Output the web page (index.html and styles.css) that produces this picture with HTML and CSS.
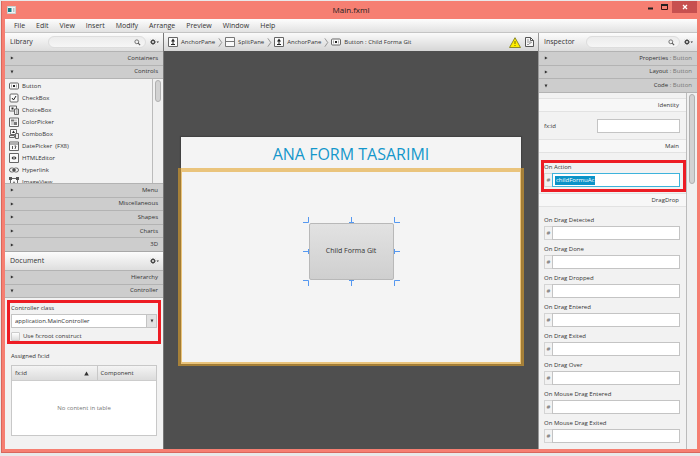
FILE: index.html
```
<!DOCTYPE html>
<html lang="en">
<head>
<meta charset="utf-8">
<title>Main.fxml</title>
<link rel="stylesheet" href="styles.css">
</head>
<body>
<svg class="defs" aria-hidden="true">
  <defs>
    <symbol id="i-anchor" viewBox="0 0 10 10"><path d="M.5.5h9v9h-9z" fill="#fafafa" stroke="#666"/><path d="M5 3v4M3 7.500h4" stroke="#222"/><path d="M5 1.500 7 4.500H3z" fill="#222"/></symbol>
    <symbol id="i-split" viewBox="0 0 10 10"><path d="M.5.5h9v9h-9zM.5 4.500h9" fill="#fafafa" stroke="#777"/></symbol>
    <symbol id="i-button" viewBox="0 0 10 10"><rect x=".5" y="2" width="9" height="6" rx="1" fill="#fafafa" stroke="#666"/><path d="M2.500 3.500v3M7.500 3.500v3" stroke="#aaa" fill="none"/><path d="M4 5h2" stroke="#222" stroke-width="2"/></symbol>
    <symbol id="i-check" viewBox="0 0 10 10"><rect x="1" y="1" width="8" height="8" rx="1" fill="#fafafa" stroke="#666"/><path d="m3 5 1.500 2L7 3" fill="none" stroke="#222"/></symbol>
    <symbol id="i-choice" viewBox="0 0 10 10"><path d="M.5 1h7v5h-7z" fill="#fafafa" stroke="#666"/><path d="M2.500 3.500h2" stroke="#222" stroke-width="2"/><path d="M5.500 4h4v5.500h-4z" fill="#eee" stroke="#666"/><path d="M7 6h1.500M7 8h1.500" stroke="#777"/></symbol>
    <symbol id="i-color" viewBox="0 0 10 10"><path d="M.5 1h9v8.500h-9z" fill="#fafafa" stroke="#666"/><path d="M2 2.500h3v2H2zM5 5h3v3H5z" fill="#777"/><path d="M5 2.500h3v2H5zM2 5h3v3H2z" fill="#ccc"/></symbol>
    <symbol id="i-combo" viewBox="0 0 10 10"><path d="M1.500.5h6v5h-6z" fill="#fafafa" stroke="#666"/><path d="m4.500 1.500 1.500 2.500H3z" fill="#222"/><path d="M.5 6.500h5v2h-5zM6.500 4.500h3v5h-3z" fill="#eee" stroke="#666"/></symbol>
    <symbol id="i-date" viewBox="0 0 10 10"><path d="M.5 1h9v8.500h-9zM.5 3h9" fill="#fafafa" stroke="#666"/><path d="M3.500 5v3M5.500 5h1.500L6 8" fill="none" stroke="#555"/></symbol>
    <symbol id="i-html" viewBox="0 0 10 10"><path d="M.5.500h9v9h-9z" fill="#fafafa" stroke="#666"/><path d="M4.500 3 2.500 5l2 2zM5.500 3l2 2-2 2z" fill="#222"/></symbol>
    <symbol id="i-link" viewBox="0 0 10 10"><rect x=".5" y="3" width="5" height="4" rx="2" fill="none" stroke="#666"/><rect x="4.500" y="3" width="5" height="4" rx="2" fill="none" stroke="#666"/><path d="M3 5h4" stroke="#222"/></symbol>
    <symbol id="i-image" viewBox="0 0 10 10"><path d="M1.500 1.500h7v7h-7z" fill="#fafafa" stroke="#666"/><path d="M0 0h3v3H0zM7 0h3v3H7zM0 7h3v3H0zM7 7h3v3H7z" fill="#555"/><path d="m3 7 2-3 2 3z" fill="#777"/></symbol>
    <symbol id="i-search" viewBox="0 0 8 8"><circle cx="3.200" cy="3.200" r="2.200" fill="none" stroke="#666"/><path d="M4.800 4.800 7 7" stroke="#555" stroke-width="1.200"/></symbol>
    <symbol id="i-gear" viewBox="0 0 9 6"><circle cx="3" cy="3" r="1.600" fill="none" stroke="#444" stroke-width="1.200"/><path d="M3 0v1M3 5v1M0 3h1M5 3h1M.9.9l.7.7M4.400 4.400l.7.700M.9 5.100l.7-.7M4.400 1.600l.7-.7" stroke="#444" stroke-width=".8"/><path d="M6.500 2.500H9L7.750 4z" fill="#333"/></symbol>
    <symbol id="i-sep" viewBox="0 0 6 10"><path d="m1 0 3.500 5L1 10" fill="none" stroke="#888"/></symbol>
    <symbol id="i-right" viewBox="0 0 5 5"><path d="M1 .5v4L4.500 2.500z" fill="#333"/></symbol>
    <symbol id="i-down" viewBox="0 0 5 5"><path d="M.7 .5h3.600L2.500 4.500z" fill="#333"/></symbol>
  </defs>
</svg>

<div class="window">
  <header class="titlebar">
    <svg class="app-icon" viewBox="0 0 9 8" aria-hidden="true"><path d="M.5.5h8v7h-8z" fill="#f2f4f4" stroke="#c9d2d2"/><path d="M1 2h3.500v4H1z" fill="#167f86"/><path d="M6 2h1.500v4H6z" fill="#b9c6c8"/></svg>
    <h1 class="title">Main.fxml</h1>
    <div class="window-buttons">
      <button class="wbtn" aria-label="Minimize"><svg width="6" height="6" viewBox="0 0 6 6"><path d="M1 4.500h5" stroke="#222" stroke-width="2"/></svg></button>
      <button class="wbtn" aria-label="Maximize"><svg width="7" height="6" viewBox="0 0 7 6"><path d="M.5.500h6v5h-6z" fill="none" stroke="#3a1512"/><path d="M0 1h7" stroke="#222" stroke-width="2"/></svg></button>
      <button class="wbtn wbtn-close" aria-label="Close"><svg width="6" height="6" viewBox="0 0 6 6"><path d="m1 1 4 4M5 1 1 5" stroke="#fff" stroke-width="1.300"/></svg></button>
    </div>
  </header>

  <nav class="menubar" aria-label="Main menu">
    <button>File</button><button>Edit</button><button>View</button><button>Insert</button><button>Modify</button><button>Arrange</button><button>Preview</button><button>Window</button><button>Help</button>
  </nav>

  <div class="body">
    <aside class="side">
      <div class="panel-head">
        <h2>Library</h2>
        <div class="search"><input type="search" aria-label="Search library"><svg><use href="#i-search"/></svg></div>
        <button class="gear" aria-label="Library options"><svg><use href="#i-gear"/></svg></button>
      </div>
      <div class="acc acc-2">
        <button><svg><use href="#i-right"/></svg><span>Containers</span></button>
        <button><svg><use href="#i-down"/></svg><span>Controls</span></button>
      </div>
      <div class="scroll library">
        <ul class="items">
          <li><svg><use href="#i-button"/></svg>Button</li>
          <li><svg><use href="#i-check"/></svg>CheckBox</li>
          <li><svg><use href="#i-choice"/></svg>ChoiceBox</li>
          <li><svg><use href="#i-color"/></svg>ColorPicker</li>
          <li><svg><use href="#i-combo"/></svg>ComboBox</li>
          <li><svg><use href="#i-date"/></svg>DatePicker&nbsp; (FX8)</li>
          <li><svg><use href="#i-html"/></svg>HTMLEditor</li>
          <li><svg><use href="#i-link"/></svg>Hyperlink</li>
          <li><svg><use href="#i-image"/></svg>ImageView</li>
        </ul>
        <div class="track"><div class="thumb thumb-short"></div></div>
      </div>
      <div class="acc acc-5">
        <button><svg><use href="#i-right"/></svg><span>Menu</span></button>
        <button><svg><use href="#i-right"/></svg><span>Miscellaneous</span></button>
        <button><svg><use href="#i-right"/></svg><span>Shapes</span></button>
        <button><svg><use href="#i-right"/></svg><span>Charts</span></button>
        <button><svg><use href="#i-right"/></svg><span>3D</span></button>
      </div>
      <div class="panel-head panel-head-doc">
        <h2>Document</h2>
        <button class="gear" aria-label="Document options"><svg><use href="#i-gear"/></svg></button>
      </div>
      <div class="acc acc-2">
        <button><svg><use href="#i-right"/></svg><span>Hierarchy</span></button>
        <button><svg><use href="#i-down"/></svg><span>Controller</span></button>
      </div>
      <div class="controller">
        <div class="controller-form marked">
          <label for="cclass">Controller class</label>
          <div class="combo">
            <select id="cclass"><option>application.MainController</option></select>
            <span class="combo-arrow"><svg><use href="#i-down"/></svg></span>
          </div>
          <label class="check"><input type="checkbox">Use fx:root construct</label>
        </div>
        <h3>Assigned fx:id</h3>
        <table class="ids">
          <thead><tr><th class="col-id"><span>fx:id<svg viewBox="0 0 5 5"><path d="M2.500.500 4.800 4.500H.2z" fill="#333"/></svg></span></th><th>Component</th></tr></thead>
          <tbody><tr><td colspan="2">No content in table</td></tr></tbody>
        </table>
      </div>
    </aside>

    <main class="center">
      <nav class="crumbs" aria-label="Selection path">
        <svg class="ico"><use href="#i-anchor"/></svg><span>AnchorPane</span><svg class="sep"><use href="#i-sep"/></svg>
        <svg class="ico"><use href="#i-split"/></svg><span>SplitPane</span><svg class="sep"><use href="#i-sep"/></svg>
        <svg class="ico"><use href="#i-anchor"/></svg><span>AnchorPane</span><svg class="sep"><use href="#i-sep"/></svg>
        <svg class="ico"><use href="#i-button"/></svg><span>Button : Child Forma Git</span>
        <div class="status">
          <svg class="warn" viewBox="0 0 12 11"><path d="M6 .7 11.500 10.500H.5z" fill="#ffee00" stroke="#8c8a2a" stroke-linejoin="round"/><path d="M6 4v3M6 8v1" stroke="#7a6a00"/></svg>
          <svg class="doc" viewBox="0 0 9 10"><path d="M.5.5h5l3 3v6h-8z" fill="#f6f6f6" stroke="#555"/><path d="M5.500.500v3h3" fill="none" stroke="#555"/><path d="M2 3h2M2 5h4M2 7.500h2M4 7l3-2" stroke="#999"/></svg>
        </div>
      </nav>
      <div class="workspace">
        <div class="stage">
          <div class="stage-title">ANA FORM TASARIMI</div>
          <div class="stage-pane">
            <div class="selected">
              <button>Child Forma Git</button>
              <svg class="handles" viewBox="0 0 97 69" aria-hidden="true"><g fill="none" stroke="#5598f0"><path d="M0 5.500h5.500V0M91.500 0v5.500H97M0 63.500h5.500V69M97 63.500h-5.500V69"/><path d="M48.500 0v5M46 5.500h5M48.500 64v5M46 63.500h5M0 34.500h5M5.500 32v5M92 34.500h5M91.500 32v5"/></g></svg>
            </div>
          </div>
        </div>
      </div>
    </main>

    <aside class="side inspector">
      <div class="panel-head">
        <h2>Inspector</h2>
        <div class="search search-narrow"><input type="search" aria-label="Search inspector"><svg><use href="#i-search"/></svg></div>
        <button class="gear" aria-label="Inspector options"><svg><use href="#i-gear"/></svg></button>
      </div>
      <div class="acc acc-3">
        <button><svg><use href="#i-right"/></svg><span>Properties <i>: Button</i></span></button>
        <button><svg><use href="#i-right"/></svg><span>Layout <i>: Button</i></span></button>
        <button><svg><use href="#i-down"/></svg><span>Code <i>: Button</i></span></button>
      </div>
      <div class="scroll">
        <div class="props">
          <h3 class="band">Identity</h3>
          <div class="idrow"><label for="fxid">fx:id</label><input id="fxid" type="text"></div>
          <h3 class="band">Main</h3>
          <div class="field action marked"><label for="onaction">On Action</label><div class="hash focus"><span>#</span><div class="edit"><input id="onaction" type="text" value="childFormuAc"></div></div></div>
          <h3 class="band">DragDrop</h3>
          <div class="fields">
            <div class="field"><label for="d1">On Drag Detected</label><div class="hash"><span>#</span><input id="d1" type="text"></div></div>
            <div class="field"><label for="d2">On Drag Done</label><div class="hash"><span>#</span><input id="d2" type="text"></div></div>
            <div class="field"><label for="d3">On Drag Dropped</label><div class="hash"><span>#</span><input id="d3" type="text"></div></div>
            <div class="field"><label for="d4">On Drag Entered</label><div class="hash"><span>#</span><input id="d4" type="text"></div></div>
            <div class="field"><label for="d5">On Drag Exited</label><div class="hash"><span>#</span><input id="d5" type="text"></div></div>
            <div class="field"><label for="d6">On Drag Over</label><div class="hash"><span>#</span><input id="d6" type="text"></div></div>
            <div class="field"><label for="d7">On Mouse Drag Entered</label><div class="hash"><span>#</span><input id="d7" type="text"></div></div>
            <div class="field"><label for="d8">On Mouse Drag Exited</label><div class="hash"><span>#</span><input id="d8" type="text"></div></div>
          </div>
        </div>
        <div class="track"><div class="thumb thumb-long"></div></div>
      </div>
    </aside>
  </div>
</div>
</body>
</html>
```
FILE: styles.css
```
* { box-sizing: border-box; }
body {
  margin: 0;
  height: 100vh;
  padding: 1px 0 3px 1px;
  background: #e9e9ea;
  font: 6px/12px "Open Sans", "Noto Sans", sans-serif;
  color: #333;
}
h1, h2, h3, ul { margin: 0; padding: 0; font: inherit; }
button, input, select { font: inherit; color: inherit; margin: 0; padding: 0; border: 0; background: none; border-radius: 0; }
svg { display: block; flex: none; }
.defs { position: absolute; width: 0; height: 0; }

.window {
  height: 100%;
  display: flex;
  flex-direction: column;
  background: #f67f72;
  border: solid #d9675c;
  border-width: 0 0 1px 1px;
  padding: 0 3px 3px;
}
.titlebar { flex: 0 0 18px; display: grid; grid-template-columns: 1fr auto 1fr; align-items: center; }
.app-icon { width: 9px; height: 8px; margin-left: 2px; }
.title { font-size: 8px; color: #222; }
.window-buttons { display: flex; justify-content: flex-end; align-self: start; height: 12px; }
.wbtn { width: 15px; display: grid; place-items: center; }
.wbtn-close { width: 25px; background: #c75050; }

.menubar { flex: 0 0 14px; display: flex; gap: 11px; padding-left: 9px; background: linear-gradient(#fdfdfd, #e2e2e2); border-bottom: 1px solid #c4c4c4; font-size: 7px; }

.body { flex: 1; min-height: 0; display: grid; grid-template-columns: 158px 1fr 159px; }
.side { display: flex; flex-direction: column; min-height: 0; background: #f2f2f2; }
.inspector { border-left: 1px solid #999; }

.panel-head { flex: 0 0 18px; display: flex; align-items: center; gap: 4px; padding: 0 4px 0 5px; background: linear-gradient(#fcfcfc, #dedede); }
.panel-head h2 { flex: 1; font-size: 7px; }
.panel-head-doc { border-top: 1px solid #a8a8a8; flex-basis: 19px; }
.search { flex: 0 0 98px; height: 12px; display: flex; align-items: center; padding: 0 4px; border: 1px solid #ddd; border-radius: 6px; background: linear-gradient(#ececec, #f6f6f6); }
.search-narrow { flex-basis: 92px; }
.search input { flex: 1; min-width: 0; height: 10px; }
.search svg { width: 7px; height: 7px; }
.gear svg { width: 9px; height: 6px; }

.acc { display: grid; grid-auto-rows: 1fr; background: #cdcdcd; flex: none; }
.acc-2 { height: 27px; }
.acc-3 { height: 41px; }
.acc-5 { height: 68px; }
.acc button { display: flex; justify-content: space-between; align-items: center; padding: 0 5px; border-top: 1px solid #b3b3b3; line-height: 11px; }
.acc svg { width: 4px; height: 4px; }
.acc i { font-style: normal; color: #777; }

.scroll { flex: 1; min-height: 0; display: flex; overflow: hidden; border-top: 1px solid #b3b3b3; }
.track { flex: 0 0 10px; padding: 1px 2px; border-left: 1px solid #bbb; background: #f0f0f0; }
.thumb { width: 6px; border: 1px solid #b0b0b0; border-radius: 3px; background: #d2d2d2; }
.thumb-short { height: 22px; }
.thumb-long { height: 90px; }
.library { flex: 0 0 105px; }
.items { flex: 1; list-style: none; padding: 1px 4px; }
.items li { display: flex; align-items: center; gap: 3px; height: 12px; }
.items svg { width: 10px; height: 10px; }

.controller { flex: 1; min-height: 0; padding: 4px 6px 13px; display: flex; flex-direction: column; border-top: 1px solid #b3b3b3; }
.controller label { display: block; }
.marked { position: relative; }
.marked::after { content: ""; position: absolute; inset: -2px -4px; border: 3px solid #ed1c24; pointer-events: none; }
.combo { position: relative; height: 14px; display: flex; }
.combo select { flex: 1; appearance: none; height: 14px; padding-left: 3px; background: #fff; border: 1px solid #c4c4c4; }
.combo-arrow { position: absolute; inset: 1px 1px 1px auto; width: 10px; display: grid; place-items: center; background: #e2e2e2; border-left: 1px solid #c4c4c4; pointer-events: none; }
.combo-arrow svg { width: 4px; height: 4px; }
.controller .check { display: flex; align-items: center; gap: 3px; padding-top: 2px; }
.check input { appearance: none; width: 9px; height: 9px; border: 1px solid #ccc; border-radius: 1px; background: linear-gradient(#fff, #ddd); }
.controller h3 { padding: 8px 0 3px; }
.ids { flex: 1; width: 100%; display: flex; flex-direction: column; background: #fff; border: 1px solid #c8c8c8; }
.ids thead, .ids tbody { display: block; }
.ids tbody { flex: 1; display: grid; }
.ids thead tr { display: flex; height: 15px; background: linear-gradient(#f4f4f4, #dcdcdc); border-bottom: 1px solid #ccc; }
.ids tbody tr { display: grid; }
.ids th { flex: 2; padding: 1px 3px; font-weight: normal; text-align: left; }
.ids .col-id { flex: 3; border-right: 1px solid #c8c8c8; }
.ids th span { display: flex; justify-content: space-between; align-items: center; padding-right: 5px; }
.ids th svg { width: 5px; height: 5px; }
.ids td { display: grid; place-items: center; padding: 0; color: #777; }

.center { display: flex; flex-direction: column; min-width: 0; border-left: 1px solid #777; }
.crumbs { flex: 0 0 18px; display: flex; align-items: center; gap: 3px; padding: 0 4px; background: linear-gradient(#fafafa, #d6d6d6); white-space: nowrap; }
.ico { width: 10px; height: 10px; }
.sep { width: 5px; height: 11px; }
.sep + .ico { margin-left: -1px; }
.status { margin-left: auto; display: flex; align-items: center; gap: 4px; }
.warn { width: 12px; height: 11px; }
.doc { width: 9px; height: 10px; }
.workspace { flex: 1; min-height: 0; display: grid; align-items: center; padding: 0 17px; background: #4f4f4f; }
.stage { background: #f4f4f4; box-shadow: 0 0 1px 1px #424242; }
.stage-title { height: 34px; display: grid; place-items: center; font-size: 16px; line-height: 24px; color: #1497cb; }
.stage-pane { position: relative; height: 193px; display: flex; justify-content: center; align-items: flex-start; padding-top: 52px; }
.stage-pane::after { content: ""; position: absolute; inset: -3px -3px -2px; border: 4px solid rgba(227, 163, 44, .6); pointer-events: none; }
.selected { position: relative; }
.selected button { display: block; width: 85px; height: 57px; font-size: 7px; border: 1px solid #b8b8b8; border-radius: 2px; background: linear-gradient(#e2e2e2, #cfcfcf); }
.handles { position: absolute; inset: -6px; width: 97px; height: 69px; }

.props { flex: 1; min-width: 0; padding-top: 5px; }
.band { height: 14px; padding-right: 7px; text-align: right; background: #f7f7f7; border: solid #e2e2e2; border-width: 1px 0; }
.props input { min-width: 0; height: 14px; padding: 0 3px; background: #fff; border: 1px solid #c4c4c4; }
.idrow { display: grid; grid-template-columns: 53px 1fr; align-items: center; padding: 7px 6px 6px 5px; }
.action { margin: 8px 6px 6px 5px; }
.action::after { inset: -1px -6px -5px -3px; }
.hash { display: flex; height: 14px; }
.hash span { flex: 0 0 8px; text-align: center; border: solid #d4d4d4; border-width: 1px 0 1px 1px; color: #666; }
.hash > input { flex: 1; }
.edit { flex: 1; display: flex; background: #fff; border: 1px solid #3db3dc; }
.props .edit input { align-self: center; width: 40px; height: 9px; margin-left: 2px; padding: 0 0 0 1px; border: 0; background: #0b93c8; color: #fff; line-height: 9px; }
.fields { padding: 7px 6px 0 5px; display: grid; gap: 3px; }
.field label { display: block; height: 12px; }
```
